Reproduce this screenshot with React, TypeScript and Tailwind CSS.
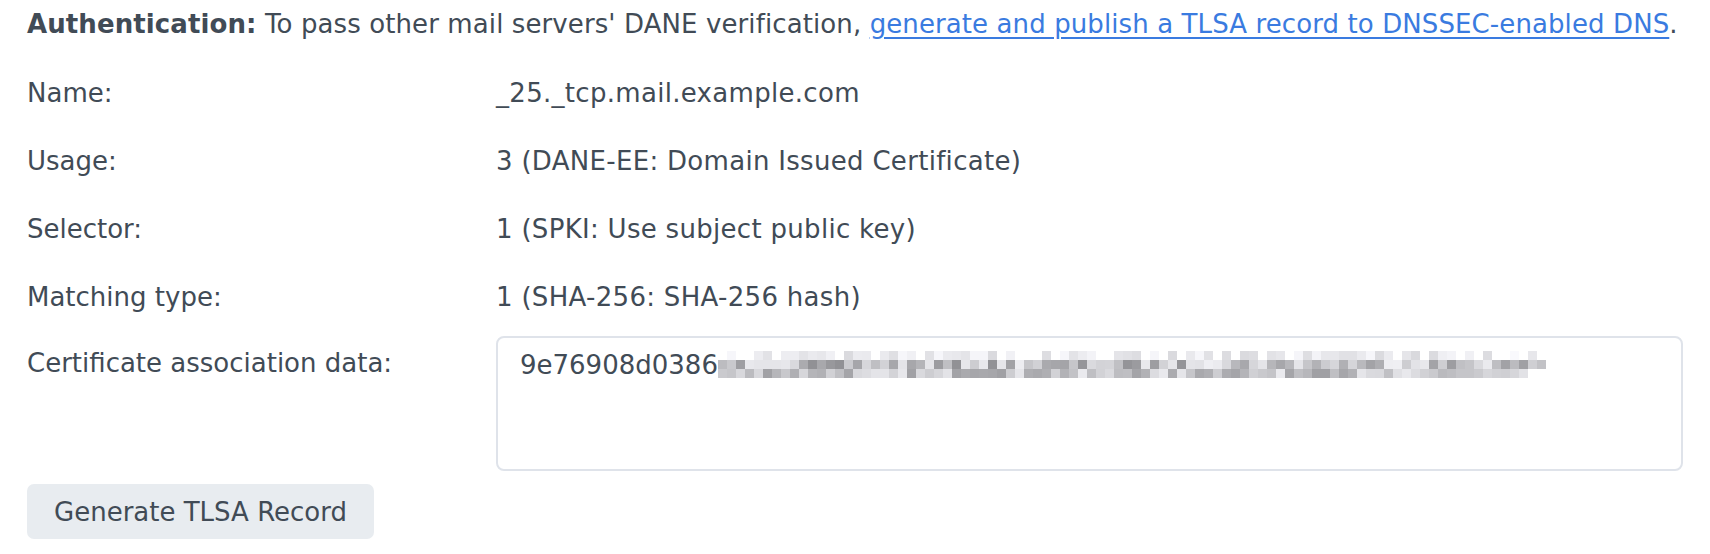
import React from "react";

const rows = [
  { label: "Name:", value: "_25._tcp.mail.example.com" },
  { label: "Usage:", value: "3 (DANE-EE: Domain Issued Certificate)" },
  { label: "Selector:", value: "1 (SPKI: Use subject public key)" },
  { label: "Matching type:", value: "1 (SHA-256: SHA-256 hash)" },
];

// pseudo-random mosaic standing in for the redacted hash
function Mosaic() {
  let seed = 7;
  const rnd = () => {
    seed = (seed * 16807) % 2147483647;
    return seed / 2147483647;
  };
  const cols = 92;
  const cells: React.ReactNode[] = [];
  for (let r = 0; r < 3; r++) {
    for (let c = 0; c < cols; c++) {
      const v = rnd();
      let g: number;
      if (r === 0) g = v < 0.35 ? 255 : 200 + Math.floor(v * 50);
      else if (r === 1) g = 145 + Math.floor(v * 95);
      else g = 160 + Math.floor(v * 75);
      if (r === 2 && c > 89) g = 255;
      cells.push(
        <rect
          key={r + "-" + c}
          x={c * 9}
          y={r * 9}
          width={9}
          height={9}
          fill={`rgb(${g},${g},${g + 4 > 255 ? 255 : g + 4})`}
        />
      );
    }
  }
  return (
    <svg width={cols * 9} height={27} className="block shrink-0">
      {cells}
    </svg>
  );
}

export default function App() {
  return (
    <div className="min-h-screen bg-white px-[27px] pt-[7px] font-['DejaVu_Sans',sans-serif] text-[26px] leading-[34px] text-[#414b56]">
      <p className="h-[52px] tracking-[0.1px]">
        <span className="font-bold">Authentication:</span> To pass other mail
        servers' DANE verification,{" "}
        <a href="#" className="text-[#3a7be0] underline underline-offset-4">
          generate and publish a TLSA record to DNSSEC-enabled DNS
        </a>
        .
      </p>

      {rows.map((row) => (
        <div key={row.label} className="flex h-[68px] items-center">
          <div className="w-[469px] shrink-0">{row.label}</div>
          <div className="tracking-[0.3px]">{row.value}</div>
        </div>
      ))}

      <div className="mt-[5px] flex">
        <div className="w-[469px] shrink-0 pt-[13px] leading-[28px]">
          Certificate association data:
        </div>
        <div className="flex h-[135px] w-[1198px] items-start rounded-[8px] border-2 border-[#dfe3ea] px-[22px] pt-[13px] leading-[28px]">
          <span>9e76908d0386</span>
          <Mosaic />
        </div>
      </div>

      <button className="mt-[13px] h-[55px] w-[347px] rounded-[7px] bg-[#e8ecf0] text-[#414b56]">
        Generate TLSA Record
      </button>
    </div>
  );
}
